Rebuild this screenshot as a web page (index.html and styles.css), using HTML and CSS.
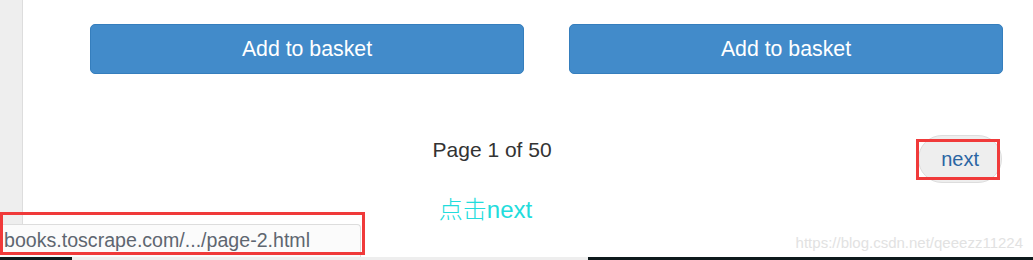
FILE: index.html
```html
<!DOCTYPE html>
<html lang="en">
<head>
<meta charset="utf-8">
<title>Books to Scrape</title>
<link rel="stylesheet" href="styles.css">
</head>
<body>
<div class="page">
  <aside class="rail"></aside>
  <main class="main">
    <div class="actions">
      <button class="btn" type="button">Add to basket</button>
      <button class="btn" type="button">Add to basket</button>
    </div>
    <nav class="pager">
      <span class="current">Page 1 of 50</span>
      <a class="next" href="#">next<span class="mark"></span></a>
    </nav>
    <p class="caption"><span class="cjk">点击</span>next</p>
  </main>
</div>
<div class="status">books.toscrape.com/.../page-2.html</div>
<div class="status-mark"></div>
<div class="watermark">https://blog.csdn.net/qeeezz11224</div>
<div class="taskbar">
  <span class="seg seg-dark-a"></span>
  <span class="seg seg-light"></span>
  <span class="seg seg-dark-b"></span>
</div>
</body>
</html>
```

FILE: styles.css
```css
* { box-sizing: border-box; }

html, body {
  margin: 0;
  padding: 0;
  width: 1033px;
  height: 260px;
  overflow: hidden;
  background: #ffffff;
  font-family: "Liberation Sans", Arial, sans-serif;
}

.page {
  display: flex;
  height: 260px;
}

.rail {
  flex: 0 0 23px;
  background: #eeeeee;
  border-right: 1px solid #dddddd;
}

.main {
  flex: 1;
  display: flex;
  flex-direction: column;
}

.actions {
  display: flex;
  gap: 45px;
  padding: 24px 30px 0 67px;
}

.btn {
  flex: 0 0 434px;
  height: 50px;
  background: #428bca;
  border: 1px solid #357ebd;
  border-radius: 5px;
  color: #ffffff;
  font-family: "Liberation Sans", Arial, sans-serif;
  font-size: 21.3px;
  line-height: 22px;
  padding: 0;
}

.pager {
  display: flex;
  align-items: flex-start;
  margin-top: 61px;
  padding: 0 31px 0 43px;
}

.current {
  flex: 1;
  text-align: center;
  font-size: 21px;
  line-height: 20px;
  color: #333333;
  margin-top: 5px;
}

.next {
  position: relative;
  display: block;
  padding: 13px 22px;
  font-size: 20px;
  line-height: 20px;
  color: #2b65a3;
  text-decoration: none;
  background: #eeeeee;
  border: 1px solid #dddddd;
  border-radius: 24px;
}

.mark {
  position: absolute;
  left: -3px;
  top: 3px;
  right: 1px;
  bottom: 2px;
  border: 3px solid #f03a3a;
}

.caption {
  margin: 13px 0 0;
  padding-right: 85px;
  text-align: center;
  font-family: "Liberation Sans", "Noto Sans CJK SC", sans-serif;
  font-size: 24px;
  line-height: 24px;
  color: #22dcdc;
}

.cjk {
  font-family: "Noto Sans CJK SC", sans-serif;
  font-weight: 300;
}

.status {
  position: absolute;
  left: 0;
  top: 224px;
  width: 361px;
  height: 33px;
  padding-left: 4px;
  background: #fbfbfb;
  border-top: 1px solid #dddddd;
  border-right: 1px solid #dddddd;
  border-top-right-radius: 4px;
  font-size: 19.6px;
  line-height: 31px;
  color: #5e6670;
  white-space: nowrap;
}

.status-mark {
  position: absolute;
  left: 0;
  top: 212px;
  width: 365px;
  height: 43px;
  border: 3px solid #f03a3a;
}

.watermark {
  position: absolute;
  right: 10px;
  top: 235px;
  font-size: 15px;
  line-height: 15px;
  color: #e2e2e2;
  white-space: nowrap;
}

.taskbar {
  position: absolute;
  left: 0;
  right: 0;
  bottom: 0;
  height: 3px;
  display: flex;
}

.seg { display: block; height: 3px; }
.seg-dark-a { flex: 0 0 72px; background: #0e1a1c; }
.seg-light { flex: 0 0 516px; background: #eeeeee; }
.seg-dark-b { flex: 1; background: #0e1a1c; }
```
